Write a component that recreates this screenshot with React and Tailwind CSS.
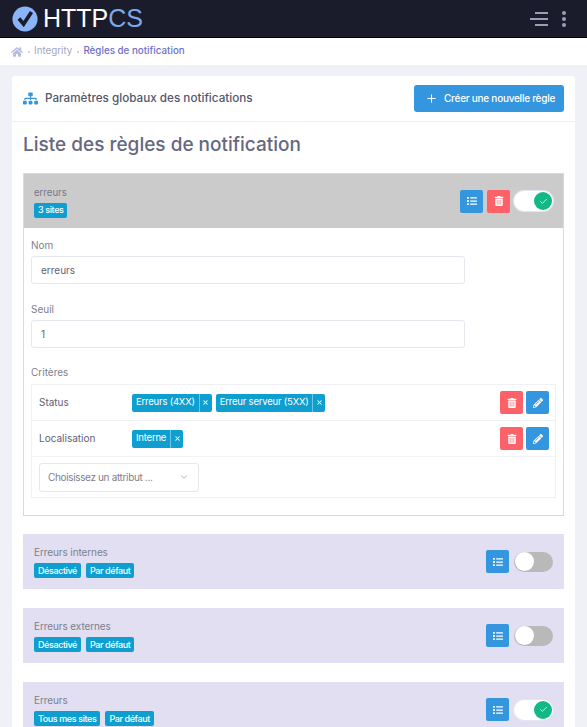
import React from "react";
import { Plus, ChevronDown, Check, X } from "lucide-react";
import { FaHome, FaSitemap, FaPencilAlt, FaTrashAlt, FaList } from "react-icons/fa";

function Badge({ children }) {
  return <span className="inline-flex h-[15px] items-center rounded-[2px] bg-[#0e9ed0] px-[4px] text-[9px] font-medium tracking-[-0.4px] text-white">{children}</span>;
}

function IconButton({ color, children }) {
  const bg = color === "red" ? "bg-[#fd6269]" : "bg-[#3396de]";
  return <button className={`flex h-[23px] w-[23px] items-center justify-center rounded-[2px] ${bg}`}>{children}</button>;
}

function Toggle({ on }) {
  if (on) {
    return (
      <div className="flex h-[20px] w-[39px] items-center justify-end rounded-full bg-white pr-[1px] ring-1 ring-[#e4e5f1]">
        <div className="flex h-[18px] w-[18px] items-center justify-center rounded-full bg-[#13b886]">
          <Check size={9} color="white" strokeWidth={2} />
        </div>
      </div>
    );
  }
  return (
    <div className="flex h-[20px] w-[39px] items-center rounded-full bg-[#b9b9b9] pl-[1px]">
      <div className="h-[19px] w-[19px] rounded-full bg-white" />
    </div>
  );
}

function Tag({ children }) {
  return (
    <span className="inline-flex h-[18px] items-center rounded-[2px] bg-[#0e9ed0] text-[9.5px] tracking-[-0.2px] text-white">
      <span className="px-[4px]">{children}</span>
      <span className="flex h-full w-[13px] items-center justify-center border-l border-[#6fc4e3]">
        <X size={7} color="white" strokeWidth={3.5} />
      </span>
    </span>
  );
}

function CriteriaRow({ label, tags }) {
  return (
    <div className="flex h-[36px] items-center border-b-[1.5px] border-[#f2f2f7] pl-[7px] pr-[6px]">
      <span className="w-[93px] text-[10px] text-[#5f6272]">{label}</span>
      <div className="flex flex-1 gap-[4px]">
        {tags.map(t => <Tag key={t}>{t}</Tag>)}
      </div>
      <div className="flex gap-[3px]">
        <IconButton color="red"><FaTrashAlt size={10} color="white" /></IconButton>
        <IconButton><FaPencilAlt size={10} color="white" /></IconButton>
      </div>
    </div>
  );
}

function Field({ label, value, className }) {
  return (
    <div className={className}>
      <div className="mb-[3px] text-[10px] leading-[16px] text-[#7d8090]">{label}</div>
      <div className="flex h-[28px] w-[434px] items-center rounded-[3px] border border-[#e6e6ee] bg-white pl-[9px] text-[10px] text-[#5f6272]">{value}</div>
    </div>
  );
}

function RuleRow({ name, badges, on, className }) {
  return (
    <div className={`flex h-[55px] items-center justify-between bg-[#e1dff1] pl-[11px] pr-[11px] ${className}`}>
      <div className="flex flex-col gap-[3px]">
        <span className="text-[10px] leading-[15px] tracking-[-0.1px] text-[#7d8090]">{name}</span>
        <div className="flex gap-[5px]">
          {badges.map(b => <Badge key={b}>{b}</Badge>)}
        </div>
      </div>
      <div className="flex items-center gap-[5px]">
        <IconButton><FaList size={10} color="white" /></IconButton>
        <Toggle on={on} />
      </div>
    </div>
  );
}

export default function App() {
  return (
    <div className="h-[727px] w-[587px] overflow-hidden bg-[#f0f0f7] font-['Inter',sans-serif]">
      {/* Header */}
      <header className="flex h-[38px] items-center justify-between border-b border-[#000] bg-[#1b1c2b] pl-[12px] pr-[21px]">
        <div className="flex items-center gap-[5px]">
          <svg width="26" height="26" viewBox="0 0 28 28">
            <circle cx="14" cy="14" r="13.5" fill="#8ab4f8" />
            <path d="M7.5 13.5l5 6L21 6.5" fill="none" stroke="#1b1c2b" strokeWidth="4" />
          </svg>
          <span className="font-['Liberation_Sans',sans-serif] text-[25px] leading-none text-white">
            HTTP<span className="text-[#7fa8e8]">CS</span>
          </span>
        </div>
        <div className="flex items-center gap-[14px]">
          <div className="flex flex-col items-end gap-[4px]">
            <div className="h-[2px] w-[13px] bg-[#9a9cb8]" />
            <div className="h-[2px] w-[18px] bg-[#9a9cb8]" />
            <div className="h-[2px] w-[13px] bg-[#9a9cb8]" />
          </div>
          <div className="flex flex-col gap-[2px]">
            <div className="h-[4px] w-[4px] rounded-full bg-[#9a9cb8]" />
            <div className="h-[4px] w-[4px] rounded-full bg-[#9a9cb8]" />
            <div className="h-[4px] w-[4px] rounded-full bg-[#9a9cb8]" />
          </div>
        </div>
      </header>

      {/* Breadcrumb */}
      <nav className="flex h-[27px] items-center gap-[4.5px] bg-white pl-[11px] text-[9.8px]">
        <FaHome size={12} color="#b9bcdc" />
        <span className="h-[2px] w-[2px] rounded-full bg-[#c5c7dd]" />
        <span className="text-[#a4a6bd]">Integrity</span>
        <span className="h-[2px] w-[2px] rounded-full bg-[#c5c7dd]" />
        <span className="font-medium text-[#6e70c9]">Règles de notification</span>
      </nav>

      {/* Card */}
      <main className="mx-[12px] mt-[11px] rounded-t-[3px] bg-white">
        <div className="flex h-[46px] items-center justify-between border-b border-[#eeeef4] px-[11px]">
          <div className="flex items-center gap-[7px]">
            <FaSitemap size={15} color="#3396de" />
            <span className="text-[11.7px] font-medium text-[#54566a]">Paramètres globaux des notifications</span>
          </div>
          <button className="flex h-[27px] w-[150px] items-center gap-[6px] whitespace-nowrap rounded-[3px] bg-[#3396de] pl-[11px] text-[10px] font-medium tracking-[-0.25px] text-white">
            <Plus size={13} color="white" />
            Créer une nouvelle règle
          </button>
        </div>

        <div className="px-[11px]">
          <h1 className="mt-[10px] text-[19px] font-medium leading-[26px] text-[#646880]">Liste des règles de notification</h1>

          {/* Opened rule */}
          <section className="mt-[15px] border border-[#d9d9d9]">
            <div className="flex h-[54px] items-center justify-between bg-[#cbcbcb] px-[10px]">
              <div className="flex flex-col gap-[3px]">
                <span className="text-[9.6px] leading-[15px] text-[#74778a]">erreurs</span>
                <div className="flex"><Badge>3 sites</Badge></div>
              </div>
              <div className="flex items-center gap-[4px]">
                <IconButton><FaList size={10} color="white" /></IconButton>
                <IconButton color="red"><FaTrashAlt size={10} color="white" /></IconButton>
                <Toggle on />
              </div>
            </div>

            <div className="px-[7px] pb-[17px] pt-[9px]">
              <Field label="Nom" value="erreurs" />
              <Field label="Seuil" value="1" className="mt-[17px]" />

              <div className="mb-[4px] mt-[16px] text-[10px] leading-[16px] text-[#7d8090]">Critères</div>
              <div className="border border-[#f0f0f5]">
                <CriteriaRow label="Status" tags={["Erreurs (4XX)", "Erreur serveur (5XX)"]} />
                <CriteriaRow label="Localisation" tags={["Interne"]} />
                <div className="flex h-[40px] items-center pl-[7px]">
                  <div className="flex h-[29px] w-[160px] items-center justify-between rounded-[3px] border border-[#e6e6ee] pl-[8px] pr-[9px] text-[10px] tracking-[-0.35px] text-[#7d8090]">
                    Choisissez un attribut ...
                    <ChevronDown size={10} color="#9a9cae" />
                  </div>
                </div>
              </div>
            </div>
          </section>

          <RuleRow className="mt-[18px]" name="Erreurs internes" badges={["Désactivé", "Par défaut"]} />
          <RuleRow className="mt-[19px]" name="Erreurs externes" badges={["Désactivé", "Par défaut"]} />
          <RuleRow className="mt-[19px]" name="Erreurs" badges={["Tous mes sites", "Par défaut"]} on />
        </div>
      </main>
    </div>
  );
}
